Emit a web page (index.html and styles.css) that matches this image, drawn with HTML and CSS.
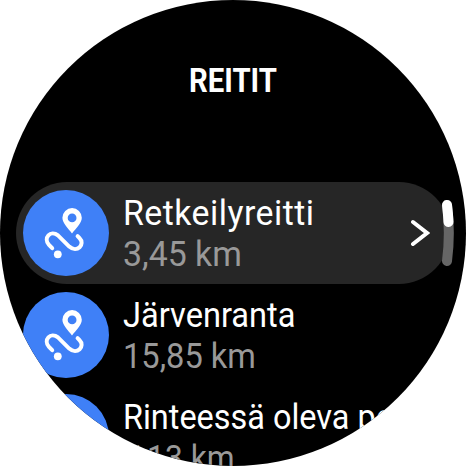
FILE: index.html
```
<!DOCTYPE html>
<html lang="fi">
<head>
<meta charset="utf-8">
<title>Reitit</title>
<link rel="stylesheet" href="styles.css">
</head>
<body>
<svg class="defs" aria-hidden="true">
  <symbol id="route" viewBox="0 0 86 86">
    <path class="line" d="M29.2 58.2 L26 54.9 C19.8 48 27.6 39.6 35 45.4 L46.2 56.6 C54 63.5 62.8 54.2 56.4 48 L54.6 46.2"/>
    <path class="fill" fill-rule="evenodd" d="M49 43.4 C45.3 38.8 39.4 33.2 39.4 27.8 A9.7 9.7 0 0 1 58.8 27.8 C58.8 33.2 52.8 38.8 49 43.4 Z M49.1 23.5 A4.4 4.4 0 1 0 49.1 32.3 A4.4 4.4 0 1 0 49.1 23.5 Z"/>
    <circle class="fill" cx="34.8" cy="64.3" r="3.9"/>
  </symbol>
</svg>
<main class="watch">
  <h1 class="title"><span>REITIT</span></h1>
  <ul class="list">
    <li class="row selected">
      <svg class="icon"><use href="#route"/></svg>
      <div class="text">
        <div class="name n1">Retkeilyreitti</div>
        <div class="distance d1">3,45 km</div>
      </div>
      <svg class="chevron" viewBox="0 0 20 28"><path d="M3 3 L17 14 L3 25"/></svg>
    </li>
    <li class="row">
      <svg class="icon"><use href="#route"/></svg>
      <div class="text">
        <div class="name n2">Järvenranta</div>
        <div class="distance d2">15,85 km</div>
      </div>
    </li>
    <li class="row">
      <svg class="icon"><use href="#route"/></svg>
      <div class="text">
        <div class="name n3">Rinteessä oleva polku</div>
        <div class="distance d3">5,13 km</div>
      </div>
    </li>
  </ul>
  <svg class="scroll" viewBox="0 0 14 68">
    <path class="track" d="M6 6 A216 216 0 0 1 6 62"/>
    <path class="thumb" d="M6 6 A216 216 0 0 1 7.5 23"/>
  </svg>
</main>
</body>
</html>
```
FILE: styles.css
```
body {
  margin: 0;
  background: #fff;
  font-family: Roboto, "Liberation Sans", sans-serif;
}
.defs { position: absolute; width: 0; height: 0; }
.watch {
  position: relative;
  width: 466px;
  height: 466px;
  overflow: hidden;
  border-radius: 50%;
  background: #000;
  color: #fff;
}
.title {
  margin: 0;
  height: 182px;
  box-sizing: border-box;
  padding-top: 61px;
  font-size: 33.3px;
  line-height: 40px;
  font-weight: 700;
  text-align: center;
}
.title span { display: inline-block; transform: scaleX(.88); }
.list { margin: 0; padding: 0 16px; list-style: none; }
.row {
  display: flex;
  align-items: center;
  height: 102px;
  padding-left: 7px;
  padding-right: 20px;
  box-sizing: border-box;
  border-radius: 51px;
}
.selected { background: #262626; }
.icon {
  flex: none;
  width: 86px;
  height: 86px;
  border-radius: 50%;
  background: #3f80f7;
}
.line { fill: none; stroke: #fff; stroke-width: 4; stroke-linecap: round; }
.fill { fill: #fff; }
.text { flex: 1; min-width: 0; margin-left: 14px; padding-top: 1px; }
.name, .distance {
  width: max-content;
  font-size: 34.5px;
  line-height: 41px;
  white-space: nowrap;
  transform-origin: 0 50%;
}
.distance { color: #999; }
.n1 { transform: scaleX(.98); letter-spacing: .5px; }
.n2 { transform: scaleX(.945); }
.n3 { transform: scaleX(.94); }
.d1 { transform: scaleX(.98); }
.d2 { transform: scaleX(.945); }
.d3 { transform: scaleX(.92); }
.chevron { flex: none; width: 20px; height: 28px; }
.chevron path { fill: none; stroke: #fff; stroke-width: 4; stroke-linecap: round; }
.scroll { position: absolute; left: 441px; top: 199px; width: 14px; height: 68px; }
.scroll path { fill: none; stroke-width: 10; stroke-linecap: round; }
.scroll .track { stroke: #666; }
.scroll .thumb { stroke: #fff; }
```
